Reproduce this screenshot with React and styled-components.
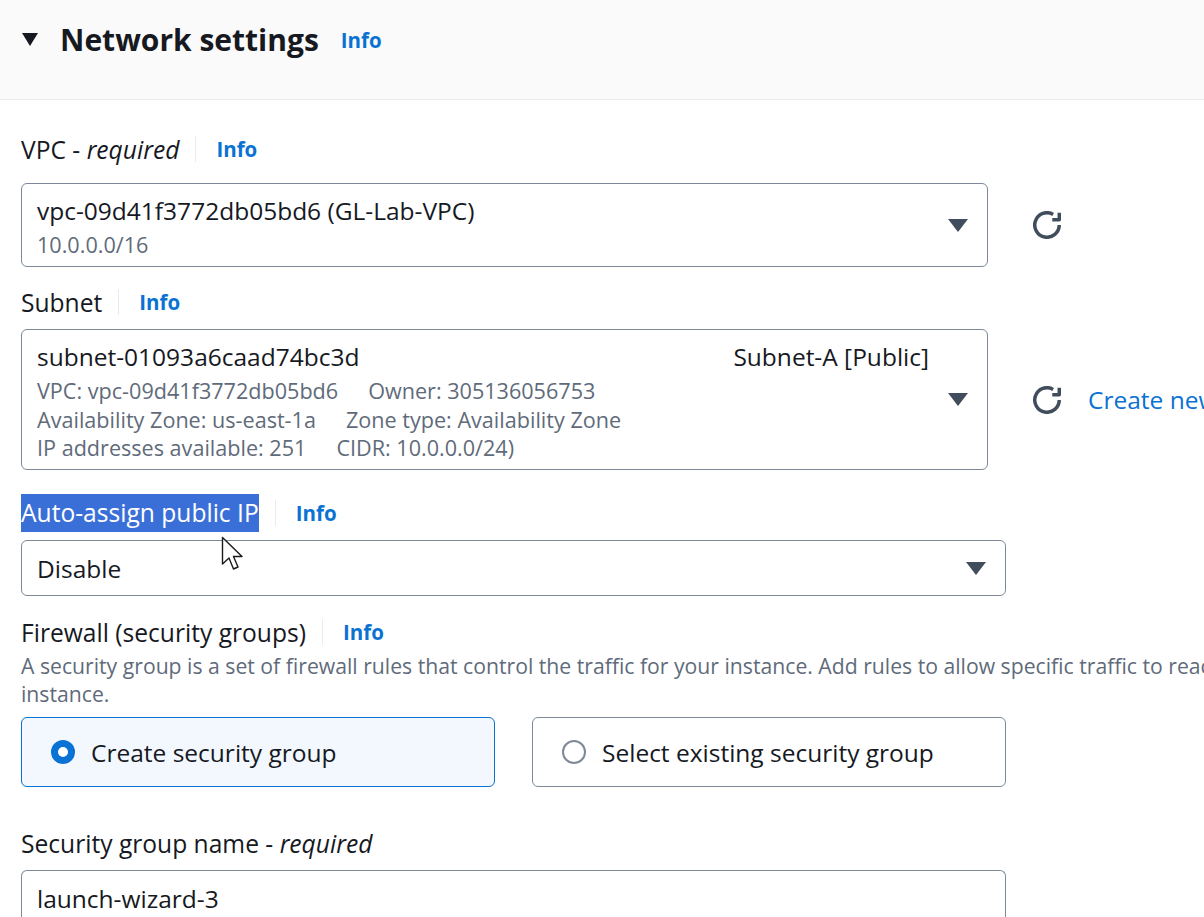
import React from 'react'
import styled, { createGlobalStyle } from 'styled-components'

const GlobalStyle = createGlobalStyle`
  html, body {
    margin: 0;
    padding: 0;
    background: #ffffff;
    overflow: hidden;
  }
  body {
    font-family: "Open Sans", "Noto Sans", Arial, sans-serif;
    color: #16191f;
  }
`

const Page = styled.div`
  position: relative;
  width: 1204px;
  height: 917px;
  overflow: hidden;
`

const Header = styled.div`
  display: flex;
  align-items: center;
  height: 100px;
  box-sizing: border-box;
  padding: 0 0 20px 22px;
  background: #fafafa;
  border-bottom: 1px solid #eaeded;
`

const Caret = styled.span`
  width: 0;
  height: 0;
  border-left: 8px solid transparent;
  border-right: 8px solid transparent;
  border-top: 13px solid #16191f;
  margin-right: 22px;
`

const Title = styled.h2`
  margin: 0;
  font-size: 30px;
  font-weight: 700;
  color: #16191f;
`

const InfoLink = styled.a`
  color: #0972d3;
  font-weight: 700;
  font-size: 20.5px;
  text-decoration: none;
  margin-left: ${p => p.$gap ?? 20}px;
`

const Body = styled.div`
  padding: 33px 0 0 21px;
`

const Field = styled.div`
  margin-bottom: ${p => p.$after ?? 0}px;
`

const LabelRow = styled.div`
  display: flex;
  align-items: center;
  height: 32px;
  margin-bottom: ${p => p.$gap ?? 11}px;
`

const LabelText = styled.span`
  font-size: 24.6px;
  color: #16191f;
  padding-right: 16px;
  border-right: 1px solid #e9ebed;
  display: flex;
  align-items: center;
  height: 26px;
  white-space: nowrap;
  em { font-style: italic; }
`

const Selected = styled.span`
  background: #3b6fd8;
  color: #ffffff;
  line-height: 38px;
  display: inline-block;
`

const Plain = styled.span`
  font-size: 24.6px;
  color: #16191f;
  em { font-style: italic; }
`

const ControlRow = styled.div`
  display: flex;
  align-items: center;
  gap: 45px;
`

const SelectBox = styled.div`
  box-sizing: border-box;
  flex-shrink: 0;
  width: ${p => p.$width}px;
  height: ${p => p.$height}px;
  border: 1px solid #7d8998;
  border-radius: 6px;
  display: flex;
  align-items: center;
  padding: 0 19px 0 15px;
  background: #ffffff;
`

const SelectContent = styled.div`
  flex: 1;
  display: flex;
  flex-direction: column;
  justify-content: center;
  padding-top: ${p => (p.$single ? 2 : 5)}px;
`

const Primary = styled.div`
  display: flex;
  justify-content: space-between;
  font-size: 24.5px;
  line-height: 32px;
  color: #16191f;
  padding-right: 19px;
  margin-bottom: ${p => (p.$single ? 0 : 4)}px;
  white-space: nowrap;
`

const Secondary = styled.div`
  font-size: 21.6px;
  line-height: 28.5px;
  color: #5f6b7a;
  white-space: nowrap;
  span + span { margin-left: 30px; }
`

const DownArrow = styled.span`
  width: 0;
  height: 0;
  border-left: 10px solid transparent;
  border-right: 10px solid transparent;
  border-top: 13px solid #414d5c;
  flex-shrink: 0;
`

const IconButton = styled.span`
  display: flex;
  align-items: center;
  gap: 27px;
  color: #0972d3;
  font-size: 24.5px;
  white-space: nowrap;
`

const Description = styled.div`
  font-size: 21.2px;
  line-height: 28px;
  color: #5f6b7a;
  width: 1300px;
  margin-top: 4px;
  margin-bottom: 9px;
`

const Tiles = styled.div`
  display: grid;
  grid-template-columns: 474px 474px;
  gap: 37px;
`

const Tile = styled.div`
  box-sizing: border-box;
  height: 70px;
  border: 1px solid ${p => (p.$active ? '#0972d3' : '#7d8998')};
  background: ${p => (p.$active ? '#f2f8fd' : '#ffffff')};
  border-radius: 6px;
  display: flex;
  align-items: center;
  padding-left: 29px;
  gap: 16px;
  font-size: 24.5px;
  color: #16191f;
`

const Radio = styled.span`
  box-sizing: border-box;
  width: 24px;
  height: 24px;
  border-radius: 50%;
  border: ${p => (p.$checked ? '7px solid #0972d3' : '2px solid #7d8998')};
  background: #ffffff;
  flex-shrink: 0;
`

const TextInput = styled.div`
  box-sizing: border-box;
  width: 985px;
  height: 47px;
  border: 1px solid #7d8998;
  border-radius: 6px 6px 0 0;
  border-bottom: none;
  padding: 11px 0 0 15px;
  font-size: 24.5px;
  line-height: 34px;
  color: #16191f;
`

const Cursor = styled.svg`
  position: absolute;
  left: 221px;
  top: 536px;
`

function RefreshIcon() {
  return (
    <svg width="28" height="28" viewBox="0 0 16 16" fill="none">
      <path d="M15 8a7 7 0 1 1-3.49-6.06" stroke="#414d5c" strokeWidth="2" strokeLinejoin="round" />
      <path d="M15.01 1.01v4h-4" stroke="#414d5c" strokeWidth="2" strokeLinejoin="round" />
    </svg>
  )
}

function Label({ children, gap }) {
  return (
    <LabelRow $gap={gap}>
      <LabelText>{children}</LabelText>
      <InfoLink>Info</InfoLink>
    </LabelRow>
  )
}

export default function App() {
  return (
    <Page>
      <GlobalStyle />
      <Header>
        <Caret />
        <Title>Network settings</Title>
        <InfoLink $gap={22}>Info</InfoLink>
      </Header>
      <Body>
        <Field $after={19}>
          <Label gap={18}>VPC -&nbsp;<em>required</em></Label>
          <ControlRow>
            <SelectBox $width={967} $height={84}>
              <SelectContent>
                <Primary><span>vpc-09d41f3772db05bd6 (GL-Lab-VPC)</span></Primary>
                <Secondary>10.0.0.0/16</Secondary>
              </SelectContent>
              <DownArrow />
            </SelectBox>
            <RefreshIcon />
          </ControlRow>
        </Field>

        <Field $after={27}>
          <Label>Subnet</Label>
          <ControlRow>
            <SelectBox $width={967} $height={141}>
              <SelectContent>
                <Primary>
                  <span>subnet-01093a6caad74bc3d</span>
                  <span>Subnet-A [Public]</span>
                </Primary>
                <Secondary><span>VPC: vpc-09d41f3772db05bd6</span><span>Owner: 305136056753</span></Secondary>
                <Secondary><span>Availability Zone: us-east-1a</span><span>Zone type: Availability Zone</span></Secondary>
                <Secondary><span>IP addresses available: 251</span><span>CIDR: 10.0.0.0/24)</span></Secondary>
              </SelectContent>
              <DownArrow />
            </SelectBox>
            <IconButton>
              <RefreshIcon />
              Create new subnet
            </IconButton>
          </ControlRow>
        </Field>

        <Field $after={20}>
          <Label><Selected>Auto-assign public IP</Selected></Label>
          <SelectBox $width={985} $height={56}>
            <SelectContent $single>
              <Primary $single><span>Disable</span></Primary>
            </SelectContent>
            <DownArrow />
          </SelectBox>
        </Field>

        <Field $after={40}>
          <Label gap={0}>Firewall (security groups)</Label>
          <Description>
            A security group is a set of firewall rules that control the traffic for your instance. Add rules to allow specific traffic to reach your
            <br />
            instance.
          </Description>
          <Tiles>
            <Tile $active>
              <Radio $checked />
              Create security group
            </Tile>
            <Tile>
              <Radio />
              Select existing security group
            </Tile>
          </Tiles>
        </Field>

        <Field>
          <LabelRow>
            <Plain>Security group name - <em>required</em></Plain>
          </LabelRow>
          <TextInput>launch-wizard-3</TextInput>
        </Field>
      </Body>

      <Cursor width="28" height="38" viewBox="0 0 28 38">
        <path d="M1.5 1.5 L1.5 28 L8 22 L12.5 33 L17 31 L12.5 20.5 L21 20.5 Z" fill="#ffffff" stroke="#1a1a1a" strokeWidth="1.4" strokeLinejoin="round" />
      </Cursor>
    </Page>
  )
}
